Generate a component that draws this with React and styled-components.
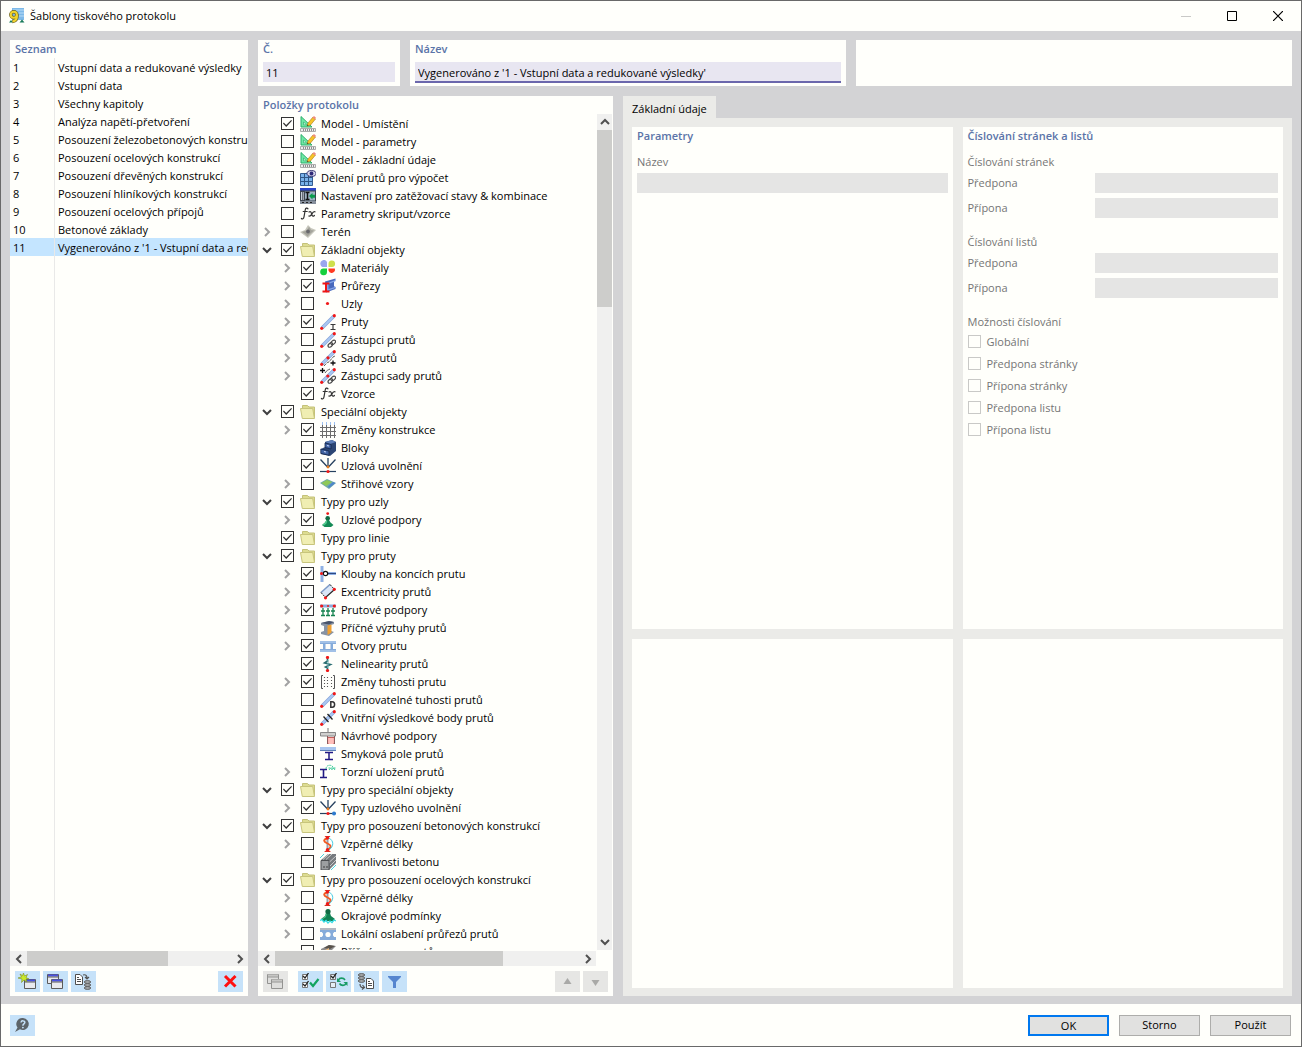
import React from "react";
import styled, { createGlobalStyle, css } from "styled-components";

const GlobalStyle = createGlobalStyle`
  *, *::before, *::after { box-sizing: border-box; }
  body {
    margin: 0;
    font-family: "Open Sans", "Noto Sans", sans-serif;
    font-size: 11px;
    line-height: 18px;
    color: #000;
  }
  button, input { font: inherit; color: inherit; }
`;

const paper = "#fffffb";
const blue = "#c6e2f9";
const heading = "#5b74a8";

/* ---------- window ---------- */

const Window = styled.div`
  display: flex;
  flex-direction: column;
  height: 100vh;
  border: 1px solid #696969;
  background: ${paper};
  overflow: hidden;
`;

const TitleBar = styled.header`
  display: flex;
  align-items: center;
  flex: none;
  height: 30px;
  padding-left: 8px;
  gap: 5px;
`;

const Title = styled.h1`
  margin: 0;
  flex: 1;
  font-size: 11px;
  font-weight: 400;
`;

const CaptionButtons = styled.div`
  display: flex;
`;

const CaptionButton = styled.button`
  display: grid;
  place-items: center;
  width: 46px;
  height: 28px;
  padding: 0;
  border: 0;
  background: none;
`;

const Body = styled.main`
  display: flex;
  flex: 1;
  min-height: 0;
  gap: 10px;
  padding: 9px 9px 8px;
  background: #d3d3d5;
`;

const Panel = styled.section`
  display: flex;
  flex-direction: column;
  min-width: 0;
  min-height: 0;
  background: ${paper};
`;

const ListPanel = styled(Panel)`
  flex: none;
  width: 238px;
`;

const TreePanel = styled(Panel)`
  flex: none;
  width: 355px;
`;

const Heading = styled.h2`
  flex: none;
  margin: 0;
  padding-left: ${(p) => (p.$flush ? 0 : 5)}px;
  height: 18px;
  font-size: 11px;
  font-weight: 600;
  line-height: 18px;
  color: ${heading};
`;

const Main = styled.div`
  display: flex;
  flex: 1;
  flex-direction: column;
  min-width: 0;
  gap: 10px;
`;

const TopRow = styled.div`
  display: flex;
  flex: none;
  gap: 10px;
`;

const HeadPanel = styled(Panel)`
  flex: ${(p) => (p.$narrow ? "none" : "1 1 0")};
  width: ${(p) => (p.$narrow ? "142px" : "auto")};
  height: 46px;
  padding: 0 5px;
`;

const HeadLabel = styled.label`
  height: 18px;
  margin-bottom: 4px;
  font-weight: 600;
  color: ${heading};
`;

const HeadInput = styled.input`
  width: 100%;
  height: ${(p) => (p.$active ? 21 : 20)}px;
  padding: ${(p) => (p.$active ? 2 : 1)}px 3px 0;
  border: 0;
  border-bottom: ${(p) => (p.$active ? "2px solid #6b67ac" : "0")};
  border-radius: 0;
  outline: 0;
  background: #e8e6f1;
`;

const Lower = styled.div`
  display: flex;
  flex: 1;
  min-height: 0;
  gap: 10px;
`;

/* ---------- list of templates ---------- */

const ListArea = styled.div`
  flex: 1;
  min-height: 0;
  overflow: hidden;
  background: linear-gradient(#e9e9e8, #e9e9e8) 44px 0 / 1px 100% no-repeat;
`;

const List = styled.table`
  width: 100%;
  table-layout: fixed;
  border-collapse: separate;
  border-spacing: 0;
  white-space: nowrap;
`;

const ListRow = styled.tr`
  height: 18px;
  background: ${(p) => (p.$selected ? "#c4e5ff" : "transparent")};
`;

const ListCell = styled.td`
  height: 18px;
  padding: 1px 0 0 3px;
  line-height: 17px;
  overflow: hidden;
  ${(p) => p.$number && css`
    width: 45px;
    border-right: 1px solid #e9e9e8;
  `}
`;

/* ---------- scroll bars ---------- */

const HBar = styled.div`
  display: flex;
  flex: none;
  height: 15px;
  margin: 1px ${(p) => p.$end || 0}px 5px 0;
  background: #f0f0ef;
`;

const VBar = styled.div`
  display: flex;
  flex: none;
  flex-direction: column;
  width: 15px;
  margin-right: 1px;
  background: #f0f0ef;
`;

const Track = styled.div`
  display: flex;
  flex: 1;
  flex-direction: ${(p) => (p.$vertical ? "column" : "row")};
`;

const Thumb = styled.div`
  flex: 0 0 ${(p) => p.$share}%;
  background: #cdcdcb;
`;

const ArrowButton = styled.button`
  display: grid;
  place-items: center;
  flex: none;
  width: ${(p) => (p.$vertical ? 15 : 17)}px;
  height: ${(p) => (p.$vertical ? 16 : 15)}px;
  padding: 0;
  border: 0;
  background: none;
  color: #505050;
`;

/* ---------- tool bars ---------- */

const ToolBar = styled.div`
  display: flex;
  flex: none;
  gap: 3px;
  padding: 0 5px 4px;
`;

const ToolButton = styled.button`
  display: grid;
  place-items: center;
  width: 25px;
  height: 21px;
  padding: 0;
  border: 0;
  background: ${(p) => (p.disabled ? "#e6e6e4" : blue)};
`;

const Spacer = styled.span`
  flex: ${(p) => (p.$size ? `0 0 ${p.$size}px` : "1")};
`;

/* ---------- tree ---------- */

const TreeArea = styled.div`
  display: flex;
  flex: 1;
  min-height: 0;
`;

const Tree = styled.ul`
  flex: 1;
  min-width: 0;
  margin: 0;
  padding: 1px 0 0;
  list-style: none;
  overflow: hidden;
`;

const TreeRow = styled.li`
  display: flex;
  align-items: center;
  gap: 5px;
  height: 18px;
  padding-left: ${(p) => p.$level * 20}px;
  white-space: nowrap;
`;

const Expander = styled.span`
  display: grid;
  place-items: center;
  flex: none;
  width: 18px;
  height: 18px;
`;

const ExpandButton = styled.button`
  display: grid;
  place-items: center;
  width: 18px;
  height: 18px;
  padding: 0;
  border: 0;
  background: none;
  color: ${(p) => (p.$open ? "#404040" : "#a2a2a2")};
`;

const Check = styled.input`
  appearance: none;
  display: grid;
  place-content: center;
  flex: none;
  width: 13px;
  height: 13px;
  margin: 0 1px 1px 0;
  border: 1px solid #333;
  background: ${paper};
  &:disabled { border-color: #c9c9c7; }
  &:checked::before {
    content: "";
    width: 9px;
    height: 7px;
    background: #333;
    clip-path: polygon(0 49%, 9% 36%, 35% 72%, 91% 0, 100% 12%, 36% 100%);
  }
`;

const TreeLabel = styled.label`
  display: flex;
  align-items: center;
  gap: 5px;
  line-height: 18px;
`;

const Glyph = styled.svg`
  display: block;
  flex: none;
`;

/* ---------- details ---------- */

const Details = styled.div`
  display: flex;
  flex: 1;
  flex-direction: column;
  min-width: 0;
`;

const Tab = styled.button`
  align-self: flex-start;
  height: 22px;
  padding: 4px 9px 0;
  border: 0;
  background: #ebebe8;
`;

const TabPage = styled.div`
  display: grid;
  flex: 1;
  min-height: 0;
  grid-template-columns: 1fr 1fr;
  grid-template-rows: 59fr 41fr;
  gap: 10px;
  padding: 9px 9px 8px;
  background: #ebebe8;
`;

const FormPanel = styled(Panel)`
  padding: 0 5px;
`;

const Group = styled.fieldset`
  display: flex;
  flex-direction: column;
  gap: ${(p) => (p.$tight ? 0 : 5)}px;
  min-width: 0;
  margin: ${(p) => (p.$first ? 8 : 15)}px 0 0;
  padding: 0;
  border: 0;
  color: #757575;
`;

const Legend = styled.legend`
  height: 18px;
  margin-bottom: ${(p) => (p.$tight ? 0 : 2)}px;
  padding: 0;
`;

const StackField = styled.label`
  display: flex;
  flex-direction: column;
  gap: 2px;
  margin-top: 8px;
  color: #757575;
`;

const Field = styled.label`
  display: grid;
  grid-template-columns: 127px 1fr;
  align-items: center;
  line-height: 20px;
`;

const GreyInput = styled.input`
  width: 100%;
  min-width: 0;
  height: 20px;
  padding: 0 3px;
  border: 0;
  background: #e5e5e4;
`;

const Option = styled.label`
  display: flex;
  align-items: center;
  gap: 5px;
  height: 22px;
`;

/* ---------- footer ---------- */

const Footer = styled.footer`
  display: flex;
  align-items: center;
  flex: none;
  gap: 10px;
  height: 42px;
  padding: 0 10px 0 9px;
`;

const DialogButton = styled.button`
  width: 81px;
  height: 21px;
  padding: 0;
  border: ${(p) => (p.$primary ? "2px solid #0078ef" : "1px solid #adadab")};
  background: #e1e1e0;
  line-height: 18px;
`;

/* ---------- icons ---------- */

const Dot = ({ x, y, r = 1.6 }) => <circle cx={x} cy={y} r={r} fill="#f01818" />;

const Bar = () => (
  <>
    <path d="M2 14 14 2" stroke="#8aa6d8" strokeWidth="3.400" />
    <path d="M2 14 14 2" stroke="#a9c8f3" strokeWidth="2" />
    <Dot x={1.7} y={14.3} />
    <Dot x={14.3} y={1.7} />
  </>
);

const Link = () => (
  <g fill="none" stroke="#4a4a4a" strokeWidth="1.2">
    <ellipse cx="10.4" cy="13" rx="2.7" ry="1.7" transform="rotate(-42 10.4 13)" />
    <ellipse cx="13.2" cy="10.4" rx="2.7" ry="1.7" transform="rotate(-42 13.2 10.4)" />
  </g>
);

const Release = () => (
  <>
    <path d="M.5 1.500 7.500 9M15.500 1.500 8.500 9M8 0v9" stroke="#26415f" strokeWidth="1.300" fill="none" />
    <path d="M0 13.500h16" stroke="#26415f" strokeWidth="1.2" />
    <circle cx="8" cy="9" r="1.400" fill="#e67b20" />
    <Dot x={8} y={13.5} />
  </>
);

const icons = {
  model: (
    <>
      <path d="M1 .5V11h11z" fill="#6fe9a4" stroke="#2cae6c" />
      <path d="M3.500 6v2.800h3z" fill={paper} stroke="#2cae6c" strokeWidth=".7" />
      <path d="M7 10l1-3 5-6 2.500 2-5 6z" fill="#f7c526" stroke="#a8741a" strokeWidth=".6" />
      <path d="M12.500 1.500 14 0l2 1.700-1.300 1.800z" fill="#ef8b7e" />
      <path d="M7 10l.5-1.500 1 .9z" fill="#333" />
      <path d="M.5 12.500h15v3H.5z" fill="#eee" stroke="#999" strokeWidth=".8" />
      <path d="M3.500 13v2m2-2v2m2-2v2m2-2v2m2-2v2m2-2v2" stroke="#777" strokeWidth=".8" />
    </>
  ),
  mesh: (
    <>
      <path d="M.5 3.500h12v12H.5z" fill="#7ab2ea" stroke="#345d90" />
      <path d="M4.500 3.500v12m4-12v12M.5 7.500h12M.5 11.500h12" stroke="#2f5684" />
      <ellipse cx="11.500" cy="3.500" rx="4.500" ry="2.900" fill="#d8d8ec" stroke="#343070" />
      <circle cx="11.500" cy="3.500" r="1.900" fill="#302a77" />
    </>
  ),
  settings: (
    <>
      <path d="M0 0h16v16H0z" fill="#3f4650" />
      <path d="M0 0h16v2.500H0z" fill="#2b45c9" />
      <path d="M1.500 4v8M3.200 4v8" stroke="#d6dce6" strokeWidth=".9" />
      <path d="M5 3.500h10v9H5z" fill="#9fb2c4" />
      <path d="M5.500 4.500h4m-2 0v7m-2 0h4" stroke="#111" strokeWidth="1.500" />
      <path d="M9 8l3.500-3v1.700H15v3h-2.500v1.700z" fill="#0a9b4c" />
      <path d="M0 13h16v3H0z" fill="#87909b" />
      <path d="M2 14.500h2m2 0h2m2 0h2" stroke="#222" />
    </>
  ),
  fx: (
    <g fill="none" stroke="#333" strokeLinecap="round" strokeWidth="1.200">
      <path d="M8 2.800C7 1.300 5.500 2.200 5.200 4L4 10.800c-.4 2.200-1.700 2.700-2.600 1.700M3.200 5.500h4" />
      <path d="M9 6c1.600-1.200 2.200.3 2.700 2.200.4 1.900 1.200 2.700 2.700 1.300M15 5.800c-1.600-.5-2.500 1-3.200 2.300-.8 1.400-1.500 2.400-3 1.900" />
    </g>
  ),
  terrain: (
    <>
      <path d="M0 8l5-2 3-5 3 3 5 2-4 4-4 4-4-3z" fill="#c6c6bb" />
      <path d="M2 8l5-1.500L9 2.500l2 3.500 3 .5-3.500 3-3 3-2.500-2.500z" fill="#a3a39a" />
      <circle cx="8" cy="7.500" r="1.900" fill="#68686b" />
    </>
  ),
  folder: (
    <>
      <path d="M2.500 3V1.500h5L9 3h5.500v10.500H4z" fill="#dddc90" stroke="#c4c178" />
      <path d="M.5 4.500h12.200l1.800 10H2.300z" fill="#f0eeb2" stroke="#c8c57c" />
    </>
  ),
  material: (
    <>
      <path d="M7 7H4a3.500 3.500 0 1 1 3-5z" fill="#9aa6ee" />
      <path d="M8.500 7V3.800A3.300 3.300 0 1 1 12 7z" fill="#cfe04c" />
      <path d="M7 8.500V12a3.400 3.400 0 1 1-3-3.500z" fill="#16d03c" />
      <path d="M8.500 8.500h6.300a3.300 3.300 0 1 1-6.300 2z" fill="#ff3a20" />
    </>
  ),
  section: (
    <>
      <path d="M5 3.500 15.500.5v2l-1.500.8v5l1.500.7V11L6 14.500z" fill="#4869bd" />
      <path d="M7 5l8.500-3v1.200L8.500 6v5l7-2.200V10L7 13z" fill="#84a5e6" />
      <path d="M2.500 5.500h7m-3.500 0v8m-3.500 0h7" stroke="#ee1414" strokeWidth="2" />
    </>
  ),
  node: <Dot x={7.500} y={7.500} />,
  bar: (
    <>
      <Bar />
      <path d="M10.500 10.500h5m-2.500 0v5m-2.500 0h5" stroke="#3a3a3a" strokeWidth="1.200" />
    </>
  ),
  barLink: (
    <>
      <Bar />
      <Link />
    </>
  ),
  barSet: (
    <>
      <Bar />
      <Dot x={8} y={7.800} />
      <path d="M4 16c2-2 3-4 5-4l4-5 2-1" fill="none" stroke="#555" strokeDasharray="3 1" />
      <path d="M13 10.500v5M10.500 13h5" stroke="#111" strokeWidth="1.300" />
    </>
  ),
  barSetLink: (
    <>
      <Bar />
      <Dot x={7.800} y={8} />
      <Link />
      <path d="M2.500 0v5M0 2.500h5" stroke="#111" strokeWidth="1.300" />
      <path d="M5 5c2-3 3-3 5-4" fill="none" stroke="#555" />
    </>
  ),
  grid: (
    <>
      <path d="M2.500 0v5m4-5v5m4-5v5m4-5v5" stroke="#9ec1f1" />
      <path d="M2.500 3v13m4-13v13m4-13v13m4-13v13M0 5.500h16M0 9.500h16M0 13.500h16" stroke="#6d6d6d" />
    </>
  ),
  blocks: (
    <>
      <path d="M5 2l7-2 4 2v9l-6 5-9-2V9l4-2z" fill="#2c4674" />
      <path d="M5 2l7-2 4 2-6 2z" fill="#5d7eb8" />
      <path d="M5 3l6 1.500V9L5 7.500zM.8 9l8.200 2v4.300L.8 13.500z" fill="#3f62a3" stroke="#14264a" strokeWidth=".8" />
      <path d="M7 5.500l2 .5M4 11.500l2 .5" stroke="#c5d4f4" strokeWidth="1.200" />
    </>
  ),
  release: <Release />,
  releaseType: (
    <>
      <Release />
      <circle cx="14" cy="13.500" r="2" fill="#2e7cd0" />
    </>
  ),
  pattern: (
    <>
      <path d="M0 7l7-4 9 4-7 6z" fill="#6fa9a9" />
      <path d="M1.500 7 7 4l5 2-6 4z" fill="#8fc957" />
      <path d="M8 10.500l5-4.500 2.500 1-6.500 5z" fill="#4f86cc" />
    </>
  ),
  support: (
    <>
      <path d="M6.500 8h2.500l1.500 2.500 3 2.500-2.500 2H4.500L2 13l3-2.500z" fill="#148a55" />
      <path d="M6.500 8h1L6.500 11.500 4 13.500l-1.800-.4L5 10.500z" fill="#50c98c" />
      <circle cx="7.700" cy="6.300" r="2.300" fill="#116b43" />
      <Dot x={7.700} y={1.600} r={1.400} />
    </>
  ),
  hinge: (
    <>
      <path d="M2 0v16" stroke="#8fb0e4" strokeWidth="3" />
      <path d="M7 7.500h9" stroke="#8fb0e4" strokeWidth="3" />
      <path d="M7 7.500h9" stroke="#2d4a82" strokeWidth="1" />
      <circle cx="5.500" cy="7.500" r="2.200" fill="#fff" stroke="#111" strokeWidth="1.200" />
      <Dot x={1.500} y={7.500} r={1.500} />
    </>
  ),
  eccentric: (
    <>
      <path d="M1 8.500 10 .5l4 4.500-8.500 8z" fill="#d9e6f7" />
      <path d="M1 8.500 10 .5" stroke="#7d9bc8" strokeWidth="1.500" />
      <path d="M5.500 13.500l9-8" stroke="#222" strokeWidth="1.200" />
      <path d="M1 8.500l4.500 5M10 .5l4.500 5" stroke="#222" strokeDasharray="2 1" />
      <Dot x={5.500} y={13.800} />
      <Dot x={14.300} y={5.300} />
    </>
  ),
  barSupport: (
    <>
      <path d="M0 4h16" stroke="#8cabdb" strokeWidth="3" />
      <path d="M3 6v8m5-8v8m5-8v8M1 9h4m1 0h4m1 0h4M1 13.500h4m1 0h4m1 0h4" stroke="#16834f" strokeWidth="1.300" />
      <Dot x={1.700} y={4} />
      <Dot x={8} y={4} r={1} />
      <Dot x={14.300} y={4} />
    </>
  ),
  stiffener: (
    <>
      <path d="M1 3l8-2 5 1v2l-3 1v6l3 1-5 4-8-2v-2l3-1V6L1 5z" fill="#8793a3" />
      <path d="M1 3l8-2 5 1-5 2.500z" fill="#47536a" />
      <path d="M7.500 5.500l4-1v8l-4 2.500z" fill="#f0a030" />
    </>
  ),
  opening: (
    <>
      <path d="M0 3h16v3h-3v5h3v3H0v-3h3V6H0z" fill="#86acda" />
      <path d="M0 4h16M0 13h16" stroke="#bed6f3" />
      <path d="M5.500 6h5v5h-5z" fill={paper} />
    </>
  ),
  weak: (
    <>
      <path d="M0 2h16v4h-2l-1 2.500 1 2.500h2v3H0v-3h2l1-2.500L2 6H0z" fill="#86acda" />
      <path d="M0 3h16" stroke="#b3b8c0" strokeWidth="2" />
      <circle cx="8" cy="8.500" r="2.600" fill={paper} />
      <path d="M1 8.500h2m10 0h2" stroke={paper} strokeWidth="2.500" />
    </>
  ),
  spring: (
    <>
      <path d="M7.500 2v3L4.500 7l6 1.500-5 2.500 2 1V15" fill="none" stroke="#286c70" strokeWidth="1.600" />
      <path d="M8 4v8" stroke="#7bb8b8" />
      <Dot x={7.500} y={1.500} />
      <Dot x={7.500} y={14.500} />
    </>
  ),
  stiffness: (
    <>
      <path d="M3 1.500H1.500v13H3M13 1.500h1.500v13H13" fill="none" stroke="#555" />
      <path d="M4.500 3v11m3-11v11m4-11v11" stroke="#555" strokeDasharray="1 2" strokeWidth="1.100" />
    </>
  ),
  barD: (
    <>
      <Bar />
      <path d="M10.800 9.700v5.500h1.400c3.200 0 3.200-5.500 0-5.500z" fill={paper} stroke="#333" strokeWidth="1.500" />
    </>
  ),
  innerPoints: (
    <>
      <Bar />
      <path d="M3.500 6.500l5 5.500M7.500 4l5 5.500" stroke="#222" strokeWidth="1.300" />
    </>
  ),
  design: (
    <>
      <path d="M8 0v7" stroke="#777" />
      <path d="M.5 4.500h15v3.500H.5z" fill="#d0d0ce" stroke="#888" />
      <path d="M7.500 9.500h7v6h-7z" fill="#f6a4a0" stroke="#c85f5b" />
      <path d="M8.500 10v6h5v-6" fill="#ffbfba" />
      <path d="M7.500 8v8m7-8v8" stroke="#8b5b5b" />
    </>
  ),
  shear: (
    <>
      <path d="M0 2.500h16" stroke="#a9c6ef" strokeWidth="3" />
      <path d="M0 4.500h16" stroke="#5d7fb7" />
      <path d="M5 6.500h8m-4 0v7m-4 0h8" stroke="#221a84" strokeWidth="1.500" />
    </>
  ),
  torsion: (
    <>
      <path d="M0 5.500h7m-3.500 0v8M0 13.500h7" stroke="#221a84" strokeWidth="1.600" />
      <path d="M6 5c0-5 7-5 8 0M8.500 4h7M9 6l1.500-2L12 6l1.500-2L15 6" fill="none" stroke="#43cc9c" strokeDasharray="2 .7" />
    </>
  ),
  buckling: (
    <>
      <path d="M7.500 2v12" stroke="#98a0ac" strokeWidth="2" />
      <path d="M8 2C2 4 4 6 7.500 7.500S12 10.500 8 14" fill="none" stroke="#f25a22" strokeWidth="1.900" />
      <path d="M9 2c5 3 5 8 0 12" fill="none" stroke="#47cbe2" />
      <path d="M7.500 3 10.500 0h-6zM7.500 13l3.500 3H4z" fill="#dc2c20" />
      <Dot x={7.500} y={2} />
      <Dot x={7.500} y={13.500} />
    </>
  ),
  concrete: (
    <>
      <path d="M1 6 8 0h8v9l-7 7H1z" fill="#777b7e" />
      <path d="M1 6.500h8V16H1z" fill="#9c9fa1" stroke="#4c4f52" />
      <path d="M3 5.500 9 0M6 5.500 12 0m-2.500 8L16 2M10 12l6-6" stroke="#c8cacb" />
      <path d="M0 4l4-4m7 16 5-5" stroke="#4bd3df" />
      <path d="M3.500 13h1m2 0h1" stroke="#222" strokeWidth="1.500" />
    </>
  ),
  boundary: (
    <>
      <path d="M6 5h4l1 3 4 3-2 2H3l-2-2 4-3z" fill="#128252" />
      <path d="M6 5h1l-1 4-3 2-1-.2 3-2.600z" fill="#4fc58a" />
      <circle cx="8" cy="3.500" r="2.600" fill="#116b43" />
      <path d="M0 12.500l2-1 2 2.500 2-1.500 2 2.500 2-2 2 1.500 2-2.500 2 1" fill="none" stroke="#35dbe4" strokeWidth="1.300" />
    </>
  ),
  clipped: (
    <>
      <path d="M1 5l8-4 7 1-6 6-9 1z" fill="#8d8d8d" />
      <path d="M4 4l5-3 6 1-5 3z" fill="#58524a" />
      <path d="M5 6l4-2v4H5z" fill="#e8b981" />
    </>
  ),
};

const Icon = ({ name }) => (
  <Glyph width="16" height="16" viewBox="0 0 16 16" aria-hidden="true">
    {icons[name]}
  </Glyph>
);

const Chevron = ({ dir }) => {
  const turn = { right: 0, down: 90, left: 180, up: 270 }[dir];
  return (
    <Glyph width="10" height="10" viewBox="0 0 10 10" aria-hidden="true">
      <path d="M3 1l4 4-4 4" fill="none" stroke="currentColor" strokeWidth="2" transform={`rotate(${turn} 5 5)`} />
    </Glyph>
  );
};

const AppLogo = () => (
  <Glyph width="16" height="16" viewBox="0 0 16 16" aria-hidden="true">
    <path d="M3 0h12v12H3z" fill="#7db9e8" />
    <path d="M4 2h11M10 5h5m-5 3h5" stroke="#b9dcf6" />
    <path d="M10.500 14.500 13 11.500l2.500 3zM0 14.500 2 12l2 2.500z" fill="#187a5a" />
    <g fill="none">
      <circle cx="4.800" cy="6.700" r="3" stroke="#6b611c" strokeWidth="3.400" />
      <path d="M7.900 6.500c.4 3.800-1 6.600-4.600 7" stroke="#6b611c" strokeWidth="3.400" />
      <circle cx="4.800" cy="6.700" r="3" stroke="#f0d42f" strokeWidth="2" />
      <path d="M7.900 6.500c.4 3.800-1 6.400-4.300 6.900" stroke="#f0d42f" strokeWidth="2" />
    </g>
  </Glyph>
);

const MiniWindow = ({ x, y, grey }) => (
  <g transform={`translate(${x} ${y})`}>
    <path d="M.5.5h11v9H.5z" fill={grey ? "#dededc" : "#e9eaee"} stroke={grey ? "#939391" : "#5b5b5b"} />
    <path d="M1 1.500h10" stroke={grey ? "#c6c6c4" : "#4a52e2"} strokeWidth="2" />
    <path d="M0 3h12" stroke={grey ? "#939391" : "#5b5b5b"} />
  </g>
);

const Tool = ({ children }) => (
  <Glyph width="19" height="17" viewBox="0 0 19 17" aria-hidden="true">
    {children}
  </Glyph>
);

const Page = ({ x, y }) => (
  <g transform={`translate(${x} ${y})`} fill="none" stroke="#4f4f4f">
    <path d="M.5.5h4.500l2.500 2.500v7.500h-7z" fill="#fff" />
    <path d="M2 3.500h2M2 5.500h4M2 7.500h4" />
  </g>
);

const Disks = ({ x, y }) => (
  <g transform={`translate(${x} ${y})`} fill="#a9adb0" stroke="#555" strokeWidth=".9">
    <ellipse cx="3.500" cy="8" rx="3.200" ry="1.400" />
    <ellipse cx="3.500" cy="5" rx="3.200" ry="1.400" />
    <ellipse cx="3.500" cy="2" rx="3.200" ry="1.400" />
  </g>
);

/* ---------- data ---------- */

const templates = [
  "Vstupní data a redukované výsledky",
  "Vstupní data",
  "Všechny kapitoly",
  "Analýza napětí-přetvoření",
  "Posouzení železobetonových konstrukcí",
  "Posouzení ocelových konstrukcí",
  "Posouzení dřevěných konstrukcí",
  "Posouzení hliníkových konstrukcí",
  "Posouzení ocelových přípojů",
  "Betonové základy",
  "Vygenerováno z '1 - Vstupní data a redukované výsledky'",
];

/* level, expander (0 none, 1 closed, 2 open), checked, icon, label */
const rows = [
  [0, 0, 1, "model", "Model - Umístění"],
  [0, 0, 0, "model", "Model - parametry"],
  [0, 0, 0, "model", "Model - základní údaje"],
  [0, 0, 0, "mesh", "Dělení prutů pro výpočet"],
  [0, 0, 0, "settings", "Nastavení pro zatěžovací stavy & kombinace"],
  [0, 0, 0, "fx", "Parametry skriput/vzorce"],
  [0, 1, 0, "terrain", "Terén"],
  [0, 2, 1, "folder", "Základní objekty"],
  [1, 1, 1, "material", "Materiály"],
  [1, 1, 1, "section", "Průřezy"],
  [1, 1, 0, "node", "Uzly"],
  [1, 1, 1, "bar", "Pruty"],
  [1, 1, 0, "barLink", "Zástupci prutů"],
  [1, 1, 0, "barSet", "Sady prutů"],
  [1, 1, 0, "barSetLink", "Zástupci sady prutů"],
  [1, 0, 1, "fx", "Vzorce"],
  [0, 2, 1, "folder", "Speciální objekty"],
  [1, 1, 1, "grid", "Změny konstrukce"],
  [1, 0, 0, "blocks", "Bloky"],
  [1, 0, 1, "release", "Uzlová uvolnění"],
  [1, 1, 0, "pattern", "Střihové vzory"],
  [0, 2, 1, "folder", "Typy pro uzly"],
  [1, 1, 1, "support", "Uzlové podpory"],
  [0, 0, 1, "folder", "Typy pro linie"],
  [0, 2, 1, "folder", "Typy pro pruty"],
  [1, 1, 1, "hinge", "Klouby na koncích prutu"],
  [1, 1, 0, "eccentric", "Excentricity prutů"],
  [1, 1, 1, "barSupport", "Prutové podpory"],
  [1, 1, 0, "stiffener", "Příčné výztuhy prutů"],
  [1, 1, 1, "opening", "Otvory prutu"],
  [1, 0, 1, "spring", "Nelinearity prutů"],
  [1, 1, 1, "stiffness", "Změny tuhosti prutu"],
  [1, 0, 0, "barD", "Definovatelné tuhosti prutů"],
  [1, 0, 0, "innerPoints", "Vnitřní výsledkové body prutů"],
  [1, 0, 0, "design", "Návrhové podpory"],
  [1, 0, 0, "shear", "Smyková pole prutů"],
  [1, 1, 0, "torsion", "Torzní uložení prutů"],
  [0, 2, 1, "folder", "Typy pro speciální objekty"],
  [1, 1, 1, "releaseType", "Typy uzlového uvolnění"],
  [0, 2, 1, "folder", "Typy pro posouzení betonových konstrukcí"],
  [1, 1, 0, "buckling", "Vzpěrné délky"],
  [1, 0, 0, "concrete", "Trvanlivosti betonu"],
  [0, 2, 1, "folder", "Typy pro posouzení ocelových konstrukcí"],
  [1, 1, 0, "buckling", "Vzpěrné délky"],
  [1, 1, 0, "boundary", "Okrajové podmínky"],
  [1, 1, 0, "weak", "Lokální oslabení průřezů prutů"],
  [1, 0, 0, "clipped", "Příčné svary prutů"],
];

const options = ["Globální", "Předpona stránky", "Přípona stránky", "Předpona listu", "Přípona listu"];

const HorizontalScroll = ({ share, end }) => (
  <HBar $end={end}>
    <ArrowButton type="button" aria-label="Posunout doleva"><Chevron dir="left" /></ArrowButton>
    <Track><Thumb $share={share} /></Track>
    <ArrowButton type="button" aria-label="Posunout doprava"><Chevron dir="right" /></ArrowButton>
  </HBar>
);

const NumberingGroup = ({ title, first }) => (
  <Group $first={first} disabled>
    <Legend>{title}</Legend>
    <Field>Předpona<GreyInput type="text" /></Field>
    <Field>Přípona<GreyInput type="text" /></Field>
  </Group>
);

export default function App() {
  return (
    <>
      <GlobalStyle />
      <Window>
        <TitleBar>
          <AppLogo />
          <Title>Šablony tiskového protokolu</Title>
          <CaptionButtons>
            <CaptionButton type="button" disabled aria-label="Minimalizovat">
              <Glyph width="10" height="10"><path d="M0 5.500h10" stroke="#c9c9c7" /></Glyph>
            </CaptionButton>
            <CaptionButton type="button" aria-label="Maximalizovat">
              <Glyph width="10" height="10"><path d="M.5.5h9v9h-9z" fill="none" stroke="#000" /></Glyph>
            </CaptionButton>
            <CaptionButton type="button" aria-label="Zavřít">
              <Glyph width="10" height="10"><path d="M0 0l10 10M10 0 0 10" stroke="#000" strokeWidth="1.200" /></Glyph>
            </CaptionButton>
          </CaptionButtons>
        </TitleBar>

        <Body>
          <ListPanel>
            <Heading>Seznam</Heading>
            <ListArea>
              <List>
                <tbody>
                  {templates.map((name, i) => (
                    <ListRow key={name} $selected={i === 10} aria-selected={i === 10}>
                      <ListCell $number>{i + 1}</ListCell>
                      <ListCell>{name}</ListCell>
                    </ListRow>
                  ))}
                </tbody>
              </List>
            </ListArea>
            <HorizontalScroll share={69} />
            <ToolBar>
              <ToolButton type="button" aria-label="Nový">
                <Tool>
                  <MiniWindow x={6} y={6} />
                  <path d="M5.500 0l1 3 3-1.500L8 4.500l3 1.500H8l1 3-3-2-2.500 2.500.5-3.500L0 5l3.500-1L2 1l2.500 1.500z" fill="#c9e82a" stroke="#7b8d25" strokeWidth=".6" />
                </Tool>
              </ToolButton>
              <ToolButton type="button" aria-label="Kopírovat">
                <Tool><MiniWindow x={1} y={1} /><MiniWindow x={5} y={6} /></Tool>
              </ToolButton>
              <ToolButton type="button" aria-label="Uložit do databáze">
                <Tool>
                  <Page x={1} y={1} />
                  <Disks x={10} y={7} />
                  <path d="M9 2c3-1 4 1 4 3m-2-1 2 2 2-2" fill="none" stroke="#555" strokeWidth="1.200" />
                </Tool>
              </ToolButton>
              <Spacer />
              <ToolButton type="button" aria-label="Smazat">
                <Tool><path d="M4 3l10.500 10.500m0-10.500L4 13.500" stroke="#ff1010" strokeWidth="3" /></Tool>
              </ToolButton>
            </ToolBar>
          </ListPanel>

          <Main>
            <TopRow>
              <HeadPanel $narrow>
                <HeadLabel htmlFor="number">Č.</HeadLabel>
                <HeadInput id="number" defaultValue="11" />
              </HeadPanel>
              <HeadPanel>
                <HeadLabel htmlFor="name">Název</HeadLabel>
                <HeadInput id="name" $active defaultValue="Vygenerováno z '1 - Vstupní data a redukované výsledky'" />
              </HeadPanel>
              <HeadPanel />
            </TopRow>

            <Lower>
              <TreePanel>
                <Heading>Položky protokolu</Heading>
                <TreeArea>
                  <Tree>
                    {rows.map(([level, expander, checked, icon, label], i) => (
                      <TreeRow key={i} $level={level}>
                        <Expander>
                          {expander > 0 && (
                            <ExpandButton type="button" $open={expander === 2} aria-label={label} aria-expanded={expander === 2}>
                              <Chevron dir={expander === 2 ? "down" : "right"} />
                            </ExpandButton>
                          )}
                        </Expander>
                        <Check type="checkbox" id={`item-${i}`} defaultChecked={!!checked} />
                        <TreeLabel htmlFor={`item-${i}`}>
                          <Icon name={icon} />
                          {label}
                        </TreeLabel>
                      </TreeRow>
                    ))}
                  </Tree>
                  <VBar>
                    <ArrowButton $vertical type="button" aria-label="Posunout nahoru"><Chevron dir="up" /></ArrowButton>
                    <Track $vertical><Thumb $share={22} /></Track>
                    <ArrowButton $vertical type="button" aria-label="Posunout dolů"><Chevron dir="down" /></ArrowButton>
                  </VBar>
                </TreeArea>
                <HorizontalScroll share={75} end={17} />
                <ToolBar>
                  <ToolButton type="button" disabled aria-label="Kopírovat položku">
                    <Tool><MiniWindow grey x={1} y={1} /><MiniWindow grey x={5} y={6} /></Tool>
                  </ToolButton>
                  <Spacer $size={4} />
                  <ToolButton type="button" aria-label="Vybrat vše">
                    <Tool>
                      <path d="M1.500 1.500h5v5h-5zM1.500 9.500h5v5h-5z" fill="#fff" stroke="#777" />
                      <path d="M2 3l2 2 3.500-5M2 11l2 2 3.500-5" fill="none" stroke="#222" strokeWidth="1.300" />
                      <path d="M9 9.500l3 3.500 5.500-7" fill="none" stroke="#12a45f" strokeWidth="2.200" />
                    </Tool>
                  </ToolButton>
                  <ToolButton type="button" aria-label="Invertovat výběr">
                    <Tool>
                      <path d="M1.500 1.500h5v5h-5zM1.500 9.500h5v5h-5z" fill="#e5edf5" stroke="#777" />
                      <path d="M2 3l2 2 3.500-5" fill="none" stroke="#222" strokeWidth="1.300" />
                      <path d="M9.500 7c1-2.500 5-2.500 6.500 0M17 10.500c-1 2.500-5 2.500-6.500 0" fill="none" stroke="#179b64" strokeWidth="1.600" />
                      <path d="M8 5v4h4zM18.500 13V9h-4z" fill="#179b64" />
                    </Tool>
                  </ToolButton>
                  <ToolButton type="button" aria-label="Načíst z databáze">
                    <Tool>
                      <Disks x={1} y={0} />
                      <Page x={9} y={5} />
                      <path d="M3 11c0 3 1.500 4 4 3.500M5.500 12l2 2.500-2.500 2" fill="none" stroke="#555" strokeWidth="1.200" />
                    </Tool>
                  </ToolButton>
                  <ToolButton type="button" aria-label="Filtr">
                    <Tool><path d="M3 3h13v1l-5 5v6H8V9L3 4z" fill="#5585cf" /></Tool>
                  </ToolButton>
                  <Spacer />
                  <ToolButton type="button" disabled aria-label="Nahoru">
                    <Tool><path d="M9.500 5l4 6h-8z" fill="#a9a9a7" /></Tool>
                  </ToolButton>
                  <ToolButton type="button" disabled aria-label="Dolů">
                    <Tool><path d="M9.500 13l-4-6h8z" fill="#a9a9a7" /></Tool>
                  </ToolButton>
                </ToolBar>
              </TreePanel>

              <Details>
                <Tab type="button" role="tab" aria-selected="true">Základní údaje</Tab>
                <TabPage>
                  <FormPanel>
                    <Heading $flush>Parametry</Heading>
                    <StackField>Název<GreyInput type="text" disabled /></StackField>
                  </FormPanel>
                  <FormPanel>
                    <Heading $flush>Číslování stránek a listů</Heading>
                    <NumberingGroup first title="Číslování stránek" />
                    <NumberingGroup title="Číslování listů" />
                    <Group $tight disabled>
                      <Legend $tight>Možnosti číslování</Legend>
                      {options.map((o) => (
                        <Option key={o}><Check type="checkbox" />{o}</Option>
                      ))}
                    </Group>
                  </FormPanel>
                  <FormPanel />
                  <FormPanel />
                </TabPage>
              </Details>
            </Lower>
          </Main>
        </Body>

        <Footer>
          <ToolButton type="button" aria-label="Nápověda">
            <Tool>
              <path d="M10 1a6 6 0 1 1-3 11.300L2 15l2.500-4.500A6 6 0 0 1 10 1z" fill="#5d6469" />
              <path d="M8 5.500c.3-2.300 4-2.100 3.800.2-.2 1.300-1.900 1.300-1.900 3" fill="none" stroke={blue} strokeWidth="1.500" />
              <circle cx="9.900" cy="10.600" r=".9" fill={blue} />
            </Tool>
          </ToolButton>
          <Spacer />
          <DialogButton type="button" $primary>OK</DialogButton>
          <DialogButton type="button">Storno</DialogButton>
          <DialogButton type="button">Použít</DialogButton>
        </Footer>
      </Window>
    </>
  );
}
